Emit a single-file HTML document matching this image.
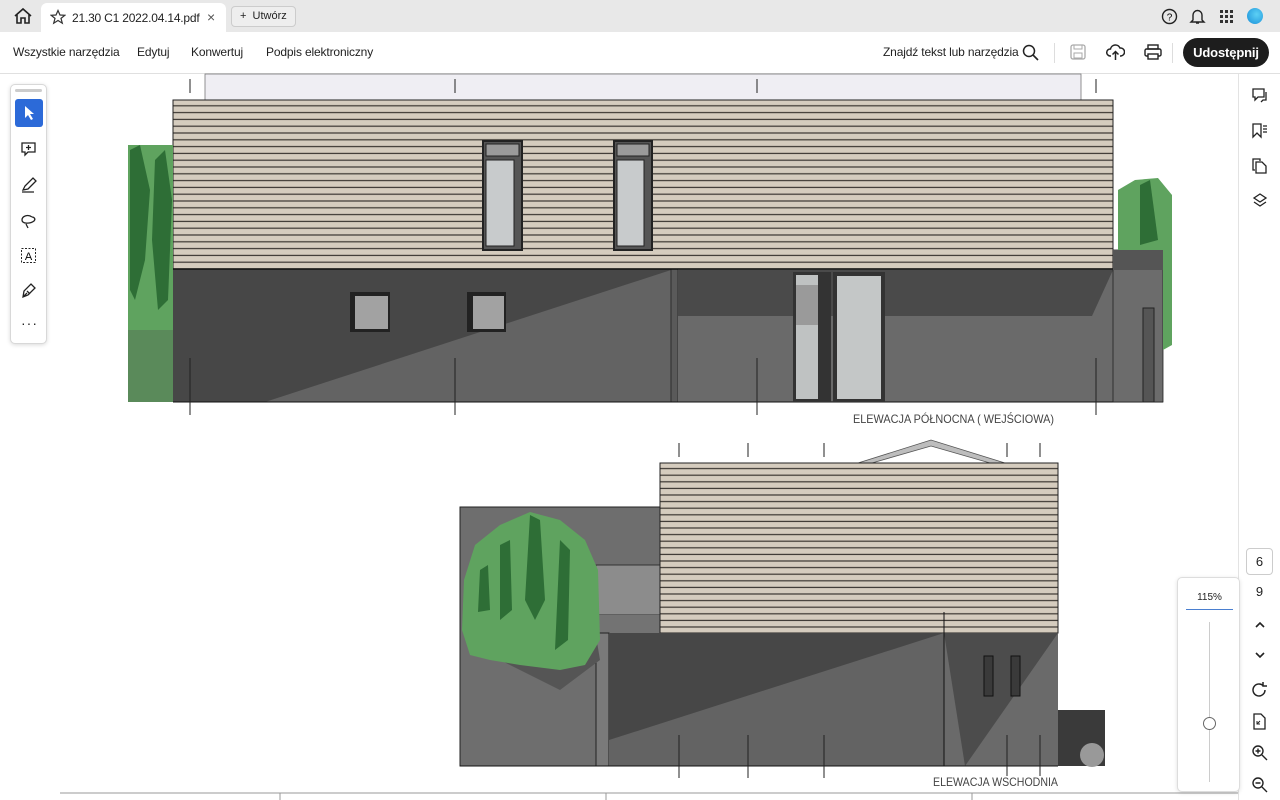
<!DOCTYPE html>
<html><head><meta charset="utf-8"><style>
*{margin:0;padding:0;box-sizing:border-box}
body{width:1280px;height:800px;overflow:hidden;background:#fff;font-family:"Liberation Sans",sans-serif;position:relative;color:#222}
.tabbar{position:absolute;left:0;top:0;width:1280px;height:32px;background:#e8e8e8}
.tab{position:absolute;left:41px;top:3px;width:185px;height:29px;background:#fff;border-radius:6px 6px 0 0;font-size:12px;letter-spacing:-0.2px}
.menu{position:absolute;left:0;top:32px;width:1280px;height:42px;background:#fff;border-bottom:1px solid #e0e0e0;font-size:12px;letter-spacing:-0.15px}
.menu span{position:absolute;top:13px;white-space:nowrap}
.abs{position:absolute}
.lt{position:absolute;left:10px;top:84px;width:37px;height:260px;background:#fff;border:1px solid #d8d8d8;border-radius:5px;box-shadow:0 1px 4px rgba(0,0,0,.15)}
.rs{position:absolute;left:1238px;top:74px;width:42px;height:726px;background:#fff;border-left:1px solid #e3e3e3}
</style></head><body>
<div class="tabbar">
<svg class="abs" style="left:13px;top:7px" width="20" height="18" viewBox="0 0 20 18"><path d="M2 9 L10 2 L18 9 M4 7 V16 H8 V11 H12 V16 H16 V7" fill="none" stroke="#222" stroke-width="1.6"/></svg>
<div class="tab">
<svg class="abs" style="left:9px;top:6px" width="16" height="16" viewBox="0 0 16 16"><path d="M8 1.5 L10 6 L14.8 6.3 L11 9.4 L12.3 14.2 L8 11.5 L3.7 14.2 L5 9.4 L1.2 6.3 L6 6 Z" fill="none" stroke="#333" stroke-width="1.2"/></svg>
<span class="abs" style="left:31px;top:8px">21.30 C1 2022.04.14.pdf</span>
<span class="abs" style="left:166px;top:6px;font-size:14px;color:#555">×</span>
</div>
<div class="abs" style="left:231px;top:6px;width:65px;height:21px;border:1px solid #ccc;border-radius:4px;background:#eee;font-size:11px;line-height:19px;padding-left:8px">+&nbsp; Utwórz</div>
<svg class="abs" style="left:1161px;top:8px" width="17" height="17"><circle cx="8.5" cy="8.5" r="7" fill="none" stroke="#222" stroke-width="1.4"/><text x="8.5" y="12.5" font-size="10" text-anchor="middle" font-family="Liberation Sans">?</text></svg>
<svg class="abs" style="left:1189px;top:7px" width="17" height="18"><path d="M4 13 V8 A4.5 4.5 0 0 1 13 8 V13 L15 15 H2 Z M7 16 H10" fill="none" stroke="#222" stroke-width="1.4"/></svg>
<svg class="abs" style="left:1220px;top:10px" width="14" height="14"><g fill="#333"><rect x="0" y="0" width="3" height="3"/><rect x="5" y="0" width="3" height="3"/><rect x="10" y="0" width="3" height="3"/><rect x="0" y="5" width="3" height="3"/><rect x="5" y="5" width="3" height="3"/><rect x="10" y="5" width="3" height="3"/><rect x="0" y="10" width="3" height="3"/><rect x="5" y="10" width="3" height="3"/><rect x="10" y="10" width="3" height="3"/></g></svg>
<div class="abs" style="left:1247px;top:8px;width:16px;height:16px;border-radius:50%;background:radial-gradient(circle at 60% 40%,#5cd0f5,#1a8fd8)"></div>
</div>
<div class="menu">
<span style="left:13px">Wszystkie narzędzia</span><span style="left:137px">Edytuj</span><span style="left:191px">Konwertuj</span><span style="left:266px">Podpis elektroniczny</span>
<span style="left:883px">Znajdź tekst lub narzędzia</span>
<svg class="abs" style="left:1022px;top:12px" width="17" height="17"><circle cx="7" cy="7" r="5.5" fill="none" stroke="#222" stroke-width="1.5"/><path d="M11 11 L16 16" stroke="#222" stroke-width="1.6"/></svg>
<div class="abs" style="left:1054px;top:11px;width:1px;height:20px;background:#ddd"></div>
<svg class="abs" style="left:1070px;top:12px" width="16" height="16"><rect x="1" y="1" width="14" height="14" rx="2" fill="none" stroke="#aaa" stroke-width="1.3"/><rect x="4" y="1" width="8" height="4" fill="none" stroke="#aaa"/><rect x="4" y="9" width="8" height="5" fill="none" stroke="#aaa"/></svg>
<svg class="abs" style="left:1106px;top:11px" width="19" height="18"><path d="M5 13 H4 A3.5 3.5 0 0 1 4.5 6 A5 5 0 0 1 14 5 A3.8 3.8 0 0 1 15 13 H14 M9.5 17 V9 M6.5 11.5 L9.5 8.5 L12.5 11.5" fill="none" stroke="#222" stroke-width="1.5"/></svg>
<svg class="abs" style="left:1144px;top:12px" width="18" height="17"><rect x="4" y="1" width="10" height="4" fill="none" stroke="#222" stroke-width="1.4"/><rect x="1" y="5" width="16" height="7" rx="1.5" fill="none" stroke="#222" stroke-width="1.4"/><rect x="4" y="10" width="10" height="5" fill="#fff" stroke="#222" stroke-width="1.4"/></svg>
<div class="abs" style="left:1172px;top:11px;width:1px;height:20px;background:#ddd"></div>
<div class="abs" style="left:1183px;top:6px;width:86px;height:29px;background:#1d1d1d;border-radius:15px;color:#fff;font-weight:bold;font-size:13px;text-align:center;line-height:29px">Udostępnij</div>
</div>
<div class="abs" style="left:205px;top:74px;width:410px;height:1px;background:#999"></div>

<svg class="abs" style="left:0;top:0" width="1238" height="800" viewBox="0 0 1238 800">
<defs>
<pattern id="sid" width="10" height="6.8" patternUnits="userSpaceOnUse" y="100"><rect width="10" height="6.8" fill="#d5ccbe"/><rect y="5.2" width="10" height="1.2" fill="#3a3530"/></pattern>
<pattern id="sid2" width="10" height="6.6" patternUnits="userSpaceOnUse" y="463"><rect width="10" height="6.6" fill="#d5ccbe"/><rect y="5" width="10" height="1.2" fill="#3a3530"/></pattern>
</defs>
<rect x="205" y="74" width="876" height="26" fill="#efeef3" stroke="#777" stroke-width="0.8"/>
<rect x="173" y="100" width="940" height="169" fill="url(#sid)" stroke="#222"/>
<rect x="128" y="145" width="45" height="257" fill="#5fa35f"/>
<path d="M130 150 L140 145 L150 190 L145 260 L135 300 L130 290 Z M155 160 L165 150 L172 200 L168 300 L158 310 L152 240 Z" fill="#2e6e36"/>
<rect x="128" y="330" width="45" height="72" fill="#5a8a5a"/>
<rect x="173" y="269" width="498" height="133" fill="#474747"/>
<polygon points="265,402 671,270 671,402" fill="#636363"/>
<rect x="671" y="269" width="7" height="133" fill="#5a5a5a" stroke="#222" stroke-width="0.8"/>
<rect x="678" y="269" width="435" height="133" fill="#6a6a6a"/>
<polygon points="678,270 1113,270 1092,316 678,316" fill="#4a4a4a"/>
<line x1="173" y1="269" x2="1113" y2="269" stroke="#111" stroke-width="1.5"/>
<line x1="173" y1="402" x2="1163" y2="402" stroke="#111"/>
<g stroke="#222"><rect x="483" y="141" width="39" height="109" fill="#555" stroke-width="2"/><rect x="486" y="144" width="33" height="12" fill="#9a9a9a"/><rect x="486" y="160" width="28" height="86" fill="#c8cbcc"/>
<rect x="614" y="141" width="38" height="109" fill="#555" stroke-width="2"/><rect x="617" y="144" width="32" height="12" fill="#9a9a9a"/><rect x="617" y="160" width="27" height="86" fill="#c8cbcc"/></g>
<rect x="350" y="292" width="40" height="40" fill="#222"/><rect x="355" y="296" width="33" height="33" fill="#a2a2a2"/>
<rect x="467" y="292" width="39" height="40" fill="#222"/><rect x="473" y="296" width="31" height="33" fill="#a2a2a2"/>
<rect x="793" y="272" width="38" height="130" fill="#333"/><rect x="796" y="275" width="22" height="124" fill="#bfc2c2"/><rect x="796" y="285" width="22" height="40" fill="#9a9a9a"/>
<rect x="833" y="272" width="52" height="130" fill="#333"/><rect x="837" y="276" width="44" height="123" fill="#c4c7c7"/>
<rect x="1113" y="250" width="50" height="152" fill="#6c6c6c" stroke="#222" stroke-width="0.8"/>
<rect x="1113" y="250" width="50" height="20" fill="#555"/>
<rect x="1143" y="308" width="11" height="94" fill="#555" stroke="#222"/>
<path d="M1118 190 L1135 180 L1158 178 L1172 195 L1172 345 L1163 350 L1163 250 L1118 250 Z" fill="#5fa35f"/>
<path d="M1140 185 L1150 180 L1158 240 L1140 245 Z" fill="#2e6e36"/>
<g stroke="#222" stroke-width="1"><line x1="190" y1="79" x2="190" y2="93"/><line x1="455" y1="79" x2="455" y2="93"/><line x1="757" y1="79" x2="757" y2="93"/><line x1="1096" y1="79" x2="1096" y2="93"/>
<line x1="190" y1="358" x2="190" y2="415"/><line x1="455" y1="358" x2="455" y2="415"/><line x1="757" y1="358" x2="757" y2="415"/><line x1="1096" y1="358" x2="1096" y2="415"/></g>
<text x="853" y="423" font-size="12" fill="#444" font-family="Liberation Sans" textLength="201" lengthAdjust="spacingAndGlyphs">ELEWACJA PÓŁNOCNA ( WEJŚCIOWA)</text>
<g stroke="#222" stroke-width="1"><line x1="679" y1="443" x2="679" y2="457"/><line x1="748" y1="443" x2="748" y2="457"/><line x1="824" y1="443" x2="824" y2="457"/><line x1="1007" y1="443" x2="1007" y2="457"/><line x1="1040" y1="443" x2="1040" y2="457"/></g>
<polygon points="858,463 931,440 1005,463 990,463 931,446 872,463" fill="#bdbdbd" stroke="#555" stroke-width="0.8"/>
<rect x="460" y="507" width="200" height="259" fill="#6e6e6e" stroke="#222"/>
<rect x="596" y="565" width="64" height="50" fill="#8c8c8c" stroke="#333"/>
<rect x="596" y="615" width="64" height="18" fill="#737373"/>
<rect x="660" y="463" width="398" height="170" fill="url(#sid2)" stroke="#222"/>
<rect x="596" y="633" width="13" height="133" fill="#7a7a7a" stroke="#222"/>
<rect x="609" y="633" width="335" height="133" fill="#474747"/>
<polygon points="609,740 944,633 944,766 609,766" fill="#636363"/>
<rect x="944" y="633" width="114" height="133" fill="#6a6a6a"/>
<polygon points="944,633 1058,633 965,766" fill="#4c4c4c"/>
<line x1="944" y1="612" x2="944" y2="766" stroke="#111"/>
<line x1="460" y1="766" x2="1058" y2="766" stroke="#111"/>
<rect x="984" y="656" width="9" height="40" fill="#3a3a3a" stroke="#111"/><rect x="1011" y="656" width="9" height="40" fill="#3a3a3a" stroke="#111"/>
<path d="M480 620 L500 660 L560 690 L600 660 L595 630 Z" fill="#555"/>
<path d="M464 580 L475 545 L500 525 L530 512 L560 520 L585 540 L598 570 L600 640 L585 665 L560 670 L520 665 L490 660 L470 655 L462 630 Z" fill="#5fa35f"/>
<path d="M530 515 L540 520 L545 600 L535 620 L525 600 Z M500 545 L510 540 L512 610 L500 620 Z M560 540 L570 550 L568 640 L555 650 Z M480 570 L488 565 L490 610 L478 612 Z" fill="#2e6e36"/>
<rect x="1058" y="710" width="47" height="56" fill="#3a3a3a"/><circle cx="1092" cy="755" r="12" fill="#999"/>
<g stroke="#222" stroke-width="1"><line x1="679" y1="735" x2="679" y2="778"/><line x1="748" y1="735" x2="748" y2="778"/><line x1="824" y1="735" x2="824" y2="778"/><line x1="1007" y1="735" x2="1007" y2="776"/><line x1="1040" y1="735" x2="1040" y2="776"/></g>
<text x="933" y="786" font-size="12" fill="#444" font-family="Liberation Sans" textLength="125" lengthAdjust="spacingAndGlyphs">ELEWACJA WSCHODNIA</text>
<line x1="60" y1="793" x2="1238" y2="793" stroke="#999"/>
<line x1="280" y1="793" x2="280" y2="800" stroke="#999"/><line x1="606" y1="793" x2="606" y2="800" stroke="#999"/><line x1="972" y1="793" x2="972" y2="800" stroke="#999"/>
</svg>

<div class="lt">
<div class="abs" style="left:4px;top:4px;width:27px;height:3px;background:#ccc;border-radius:2px"></div>
<div class="abs" style="left:4px;top:14px;width:28px;height:28px;background:#2c6ad8;border-radius:3px"></div>
<svg class="abs" style="left:12px;top:20px" width="14" height="16"><path d="M2 1 L2 13 L5 10 L8 15 L10 14 L7 9 L11 9 Z" fill="#fff"/></svg>
<svg class="abs" style="left:9px;top:56px" width="18" height="18"><path d="M2 2 H15 V11 H8 L5 14 V11 H2 Z M8.5 4 V9 M6 6.5 H11" fill="none" stroke="#222" stroke-width="1.3"/></svg>
<svg class="abs" style="left:9px;top:91px" width="18" height="18"><path d="M3 14 L5 10 L13 2 L16 5 L8 13 Z M2 16 H14" fill="none" stroke="#222" stroke-width="1.3"/></svg>
<svg class="abs" style="left:9px;top:127px" width="18" height="18"><path d="M12 5 C8 2 2 4 2 8 C2 12 10 12 14 9 C16 7 14 5 12 5 M6 12 L8 16" fill="none" stroke="#222" stroke-width="1.3"/></svg>
<svg class="abs" style="left:9px;top:162px" width="18" height="18"><rect x="1.5" y="1.5" width="14" height="14" fill="none" stroke="#222" stroke-dasharray="2 1.5"/><text x="8.5" y="13" font-size="11" text-anchor="middle" font-family="Liberation Sans">A</text></svg>
<svg class="abs" style="left:9px;top:197px" width="18" height="18"><path d="M3 15 L4 9 L11 2 L15 6 L8 13 Z M7 9 L10 12 M3 15 L7 11" fill="none" stroke="#222" stroke-width="1.3"/></svg>
<div class="abs" style="left:10px;top:230px;font-size:14px;letter-spacing:1px">···</div>
</div>

<div class="rs">
<svg class="abs" style="left:12px;top:13px" width="18" height="18"><path d="M2 2 H13 V10 H7 L4 13 V10 H2 Z M15 5 V13 H12 L10 15" fill="none" stroke="#222" stroke-width="1.3"/></svg>
<svg class="abs" style="left:12px;top:48px" width="18" height="18"><path d="M2 2 H10 V15 L6 11 L2 15 Z M12 4 H16 M12 7 H16 M12 10 H16" fill="none" stroke="#222" stroke-width="1.3"/></svg>
<svg class="abs" style="left:12px;top:83px" width="18" height="18"><path d="M4 13 H2 V2 H9 V4 M5 5 H11 L15 9 V16 H5 Z" fill="none" stroke="#222" stroke-width="1.3"/></svg>
<svg class="abs" style="left:12px;top:118px" width="18" height="18"><path d="M9 2 L15 6 L9 10 L3 6 Z M3 10 L9 14 L15 10" fill="none" stroke="#222" stroke-width="1.3"/></svg>
<div class="abs" style="left:7px;top:474px;width:27px;height:27px;border:1px solid #ccc;border-radius:4px;text-align:center;line-height:25px;font-size:13px">6</div>
<div class="abs" style="left:7px;top:510px;width:27px;text-align:center;font-size:13px">9</div>
<svg class="abs" style="left:15px;top:546px" width="12" height="10"><path d="M2 7 L6 3 L10 7" fill="none" stroke="#222" stroke-width="1.6"/></svg>
<svg class="abs" style="left:15px;top:576px" width="12" height="10"><path d="M2 3 L6 7 L10 3" fill="none" stroke="#222" stroke-width="1.6"/></svg>
<svg class="abs" style="left:12px;top:607px" width="18" height="18"><path d="M14 9 A6 6 0 1 1 12 4.5 M12 1 V5 H16" fill="none" stroke="#222" stroke-width="1.5"/></svg>
<svg class="abs" style="left:12px;top:638px" width="18" height="20"><path d="M3 2 H10 L14 6 V17 H3 Z" fill="none" stroke="#222" stroke-width="1.3"/><path d="M6 12 L9 9 M6 9 V12 H9" fill="none" stroke="#222"/></svg>
<svg class="abs" style="left:12px;top:670px" width="18" height="18"><circle cx="7" cy="7" r="5" fill="none" stroke="#222" stroke-width="1.4"/><path d="M11 11 L16 16 M4.5 7 H9.5 M7 4.5 V9.5" stroke="#222" stroke-width="1.4"/></svg>
<svg class="abs" style="left:12px;top:702px" width="18" height="18"><circle cx="7" cy="7" r="5" fill="none" stroke="#222" stroke-width="1.4"/><path d="M11 11 L16 16 M4.5 7 H9.5" stroke="#222" stroke-width="1.4"/></svg>
</div>
<div class="abs" style="left:1177px;top:577px;width:63px;height:215px;background:#fff;border:1px solid #ddd;border-radius:5px;box-shadow:0 1px 4px rgba(0,0,0,.12)">
<div class="abs" style="left:0;top:14px;width:63px;text-align:center;font-size:10px">115%</div>
<div class="abs" style="left:8px;top:31px;width:47px;height:1px;background:#4a7fd0"></div>
<div class="abs" style="left:31px;top:44px;width:1px;height:160px;background:#ccc"></div>
<div class="abs" style="left:25px;top:139px;width:13px;height:13px;border:1.5px solid #666;border-radius:50%;background:#fff"></div>
</div>
</body></html>
